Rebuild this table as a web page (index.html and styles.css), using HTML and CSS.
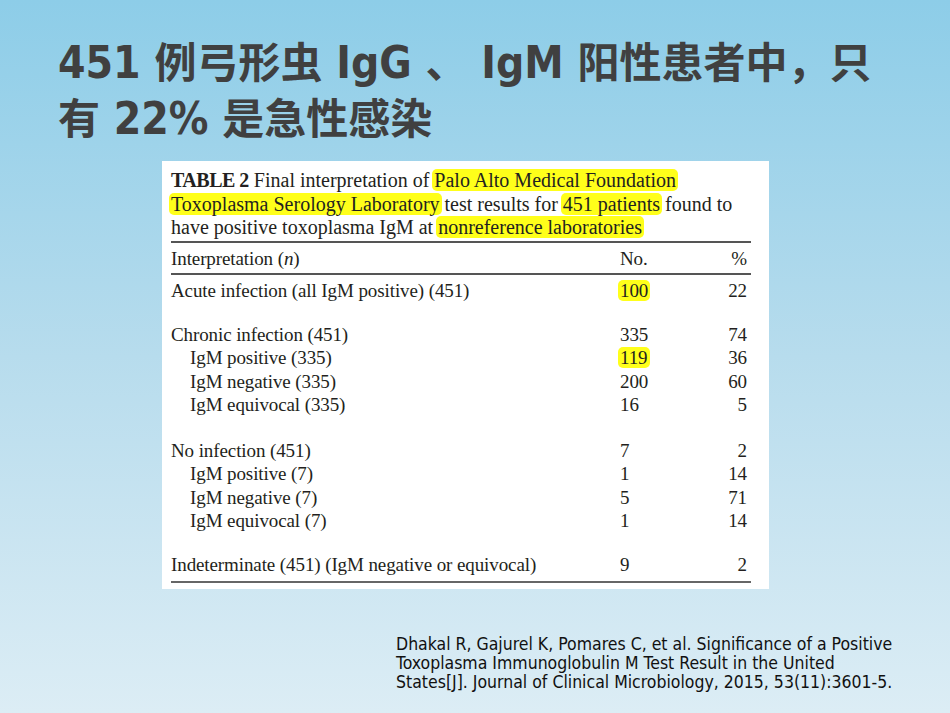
FILE: index.html
```html
<!DOCTYPE html>
<html lang="zh">
<head>
<meta charset="utf-8">
<title>451 例弓形虫 IgG、IgM 阳性患者</title>
<link rel="stylesheet" href="styles.css">
</head>
<body>
<div class="slide">
  <h1 class="title">451 <span class="han">例弓形虫</span> IgG <span class="han">、</span> IgM <span class="han">阳性患者中，只</span><br><span class="han">有</span> 22% <span class="han">是急性感染</span></h1>

  <div class="figure">
    <p class="caption"><b class="tag">TABLE 2</b> Final interpretation of <span class="hl">Palo Alto Medical Foundation</span><br><span class="hl">Toxoplasma Serology Laboratory</span> test results for <span class="hl">451 patients</span> found to<br>have positive toxoplasma IgM at <span class="hl">nonreference laboratories</span></p>

    <div class="table">
      <div class="row head"><span class="lab">Interpretation (<i>n</i>)</span><span class="no">No.</span><span class="pc">%</span></div>

      <div class="group first">
        <div class="row"><span class="lab">Acute infection (all IgM positive) (451)</span><span class="no"><span class="hl">100</span></span><span class="pc">22</span></div>
      </div>

      <div class="group">
        <div class="row"><span class="lab">Chronic infection (451)</span><span class="no">335</span><span class="pc">74</span></div>
        <div class="row sub"><span class="lab">IgM positive (335)</span><span class="no"><span class="hl">119</span></span><span class="pc">36</span></div>
        <div class="row sub"><span class="lab">IgM negative (335)</span><span class="no">200</span><span class="pc">60</span></div>
        <div class="row sub"><span class="lab">IgM equivocal (335)</span><span class="no">16</span><span class="pc">5</span></div>
      </div>

      <div class="group mid">
        <div class="row"><span class="lab">No infection (451)</span><span class="no">7</span><span class="pc">2</span></div>
        <div class="row sub"><span class="lab">IgM positive (7)</span><span class="no">1</span><span class="pc">14</span></div>
        <div class="row sub"><span class="lab">IgM negative (7)</span><span class="no">5</span><span class="pc">71</span></div>
        <div class="row sub"><span class="lab">IgM equivocal (7)</span><span class="no">1</span><span class="pc">14</span></div>
      </div>

      <div class="group last">
        <div class="row"><span class="lab">Indeterminate (451) (IgM negative or equivocal)</span><span class="no">9</span><span class="pc">2</span></div>
      </div>
    </div>
  </div>

  <p class="cite">Dhakal R, Gajurel K, Pomares C, et al. Significance of a Positive<br>Toxoplasma Immunoglobulin M Test Result in the United<br>States[J]. Journal of Clinical Microbiology, 2015, 53(11):3601-5.</p>
</div>
</body>
</html>
```

FILE: styles.css
```css
html, body {
  margin: 0;
  padding: 0;
}
body {
  width: 950px;
  height: 713px;
  overflow: hidden;
  background: linear-gradient(to bottom, #8dcde8 0%, #b7dced 50%, #dcedf5 100%);
}
.slide {
  width: 950px;
  height: 713px;
  display: flex;
  flex-direction: column;
}
.title {
  margin: 0;
  padding: 33px 0 0 58px;
  font-family: "DejaVu Sans Condensed", "DejaVu Sans", "Noto Sans CJK SC", sans-serif;
  font-stretch: condensed;
  font-weight: bold;
  font-size: 44px;
  line-height: 53px;
  color: #404040;
}
.han {
  font-family: "Noto Sans CJK SC", sans-serif;
  font-size: 42px;
}
.figure {
  margin: 16px 0 0 162px;
  width: 607px;
  height: 428px;
  box-sizing: border-box;
  background: #fff;
  padding: 8px 18px 0 9px;
  font-family: "Liberation Serif", "Times New Roman", serif;
  color: #231f20;
}
.caption {
  margin: 0;
  font-size: 20px;
  line-height: 23.5px;
  padding-bottom: 1px;
  border-bottom: 2px solid #555;
}
.tag {
  font-weight: bold;
  letter-spacing: -0.5px;
}
.hl {
  background: #ffff1a;
  border-radius: 5px;
  padding: 0 2px;
  margin: 0 -2px;
}
.table {
  font-size: 19px;
  letter-spacing: -0.1px;
}
.row {
  display: grid;
  grid-template-columns: 449px 1fr auto;
  align-items: center;
  height: 23.5px;
}
.row.sub .lab {
  padding-left: 19px;
}
.row .pc {
  text-align: right;
  padding-right: 4px;
}
.row.head {
  height: 28px;
  padding-top: 2px;
  border-bottom: 2px solid #555;
}
.group {
  padding-top: 20px;
}
.group.first {
  padding-top: 5px;
}
.group.mid {
  padding-top: 22px;
}
.group.last {
  padding-top: 20.5px;
  padding-bottom: 4px;
  border-bottom: 2px solid #666;
}
.cite {
  margin: 46px 0 0 396px;
  font-family: "DejaVu Sans Condensed", "DejaVu Sans", sans-serif;
  font-stretch: condensed;
  font-size: 17.5px;
  line-height: 19px;
  color: #111;
}
```
